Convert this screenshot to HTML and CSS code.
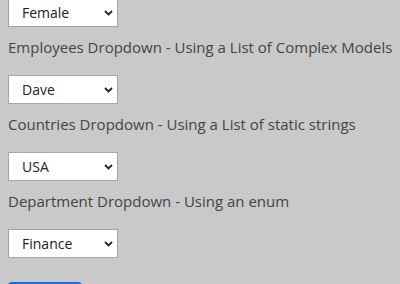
FILE: index.html
```html
<!DOCTYPE html>
<html>
<head>
<meta charset="utf-8">
<link rel="stylesheet" href="styles.css">
</head>
<body>
<form class="form">
  <div class="select-wrap">
    <select class="select"><option>Female</option></select>
    <svg class="chev" width="9" height="6" viewBox="0 0 9 6"><path d="M1 1 L4.5 4.5 L8 1" fill="none" stroke="#222" stroke-width="1.8"/></svg>
  </div>
  <label class="label">Employees Dropdown - Using a List of Complex Models</label>
  <div class="select-wrap">
    <select class="select"><option>Dave</option></select>
    <svg class="chev" width="9" height="6" viewBox="0 0 9 6"><path d="M1 1 L4.5 4.5 L8 1" fill="none" stroke="#222" stroke-width="1.8"/></svg>
  </div>
  <label class="label">Countries Dropdown - Using a List of static strings</label>
  <div class="select-wrap">
    <select class="select"><option>USA</option></select>
    <svg class="chev" width="9" height="6" viewBox="0 0 9 6"><path d="M1 1 L4.5 4.5 L8 1" fill="none" stroke="#222" stroke-width="1.8"/></svg>
  </div>
  <label class="label">Department Dropdown - Using an enum</label>
  <div class="select-wrap">
    <select class="select"><option>Finance</option></select>
    <svg class="chev" width="9" height="6" viewBox="0 0 9 6"><path d="M1 1 L4.5 4.5 L8 1" fill="none" stroke="#222" stroke-width="1.8"/></svg>
  </div>
  <button type="button" class="btn">Submit</button>
</form>
</body>
</html>
```
FILE: styles.css
```css
html, body {
  margin: 0;
  padding: 0;
  background: #c9c9c9;
  overflow: hidden;
}
.form {
  display: flex;
  flex-direction: column;
  align-items: flex-start;
  padding: 0 8px;
  margin-top: -2px;
  font-family: "Open Sans", "Liberation Sans", sans-serif;
}
.select-wrap {
  position: relative;
  width: 110px;
  height: 29px;
}
.select {
  appearance: none;
  -webkit-appearance: none;
  box-sizing: border-box;
  width: 110px;
  height: 29px;
  margin: 0;
  padding: 0 0 0 13px;
  border: 1px solid #a6a6a6;
  border-radius: 0;
  background: #fff;
  color: #222;
  font-family: inherit;
  font-size: 14px;
}
.chev {
  position: absolute;
  right: 5px;
  top: 12px;
}
.label {
  display: block;
  margin: 8px 0 16px;
  font-size: 15px;
  line-height: 24px;
  color: #444;
  white-space: nowrap;
}
.btn {
  margin-top: 24px;
  width: 74px;
  height: 36px;
  border: none;
  border-radius: 4px;
  background: #0d6efd;
  color: #fff;
  font-family: inherit;
  font-size: 15px;
}
```
